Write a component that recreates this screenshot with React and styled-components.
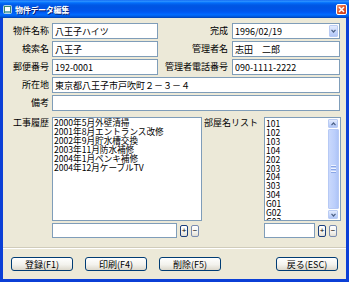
import React from 'react'
import styled, { createGlobalStyle } from 'styled-components'

const GlobalStyle = createGlobalStyle`
  html, body {
    margin: 0;
    padding: 0;
    background: #ffffff;
  }
  body {
    font-family: "Noto Sans CJK JP", "Liberation Sans", sans-serif;
    font-size: 9px;
    color: #000;
  }
`;

const Window = styled.div`
  width: 349px;
  height: 282px;
  display: flex;
  flex-direction: column;
  background: #0b3fd6;
`;

const TitleBar = styled.div`
  height: 18px;
  flex: none;
  display: flex;
  align-items: center;
  gap: 3px;
  padding: 0 2px 0 3px;
  background: linear-gradient(to bottom,
    #0058ee 0%, #3593ff 5%, #288eff 8%, #127dff 12%, #036ffc 16%,
    #0262ee 22%, #0057e5 30%, #0054e3 40%, #0055eb 60%, #005bf5 70%,
    #026afe 80%, #0062ef 88%, #0052d6 94%, #0040ab 100%);
`;

const TitleText = styled.span`
  flex: 1;
  color: #ffffff;
  font-weight: bold;
  font-size: 8px;
  letter-spacing: -0.3px;
  text-shadow: 1px 1px 0 #0a1d6e;
`;

const CloseBox = styled.div`
  width: 11px;
  height: 11px;
  box-sizing: border-box;
  border: 1px solid #ffffff;
  border-radius: 2px;
  background: linear-gradient(135deg, #f19a7b, #e35a2b 45%, #c8391a);
  display: flex;
  align-items: center;
  justify-content: center;
`;

const Frame = styled.div`
  flex: 1;
  display: flex;
  padding: 0 3px 3px;
`;

const Content = styled.div`
  flex: 1;
  display: flex;
  flex-direction: column;
  background: #ece9d8;
`;

const FormGrid = styled.div`
  display: grid;
  grid-template-columns: 49px 106px 74px 108px;
  grid-auto-rows: 16px;
  row-gap: 2px;
  padding-top: 5px;
`;

const Label = styled.div`
  text-align: right;
  padding-right: ${p => p.$pad || 3}px;
  align-self: ${p => (p.$top ? 'start' : 'center')};
  padding-top: ${p => (p.$top ? 1 : 0)}px;
  white-space: nowrap;
  line-height: 10px;
`;

const TextBox = styled.input`
  box-sizing: border-box;
  width: 100%;
  min-width: 0;
  height: ${p => p.$h || 16}px;
  margin: 0;
  padding: 0 2px;
  border: 1px solid #7f9db9;
  background: #ffffff;
  font: inherit;
  font-size: 9px;
  color: #000;
  outline: none;
  grid-column: ${p => (p.$wide ? 'span 3' : 'auto')};
`;

const Combo = styled.div`
  box-sizing: border-box;
  height: 16px;
  border: 1px solid #7f9db9;
  background: #ffffff;
  display: flex;
  align-items: center;
  padding: 1px 1px 1px 2px;
`;

const ComboText = styled.span`
  flex: 1;
`;

const ArrowBtn = styled.div`
  width: ${p => p.$w || 9}px;
  height: ${p => p.$h || 12}px;
  box-sizing: border-box;
  border: 1px solid #b9cbf3;
  border-radius: 1px;
  background: linear-gradient(to bottom, #e3ebfd, #c4d5fb 60%, #b1c6f6);
  display: flex;
  align-items: center;
  justify-content: center;
  flex: none;
`;

const Lower = styled.div`
  display: grid;
  grid-template-columns: 49px 150px 62px 77px;
  grid-template-rows: 104px 15px;
  row-gap: 2px;
  margin-top: 6px;
`;

const Memo = styled.textarea`
  box-sizing: border-box;
  width: 100%;
  height: 100%;
  margin: 0;
  padding: 0 1px;
  border: 1px solid #7f9db9;
  background: #ffffff;
  font: inherit;
  font-size: 8.6px;
  line-height: 9.1px;
  color: #000;
  resize: none;
  overflow: hidden;
  outline: none;
`;

const ListBox = styled.div`
  box-sizing: border-box;
  border: 1px solid #7f9db9;
  background: #ffffff;
  display: flex;
  overflow: hidden;
`;

const ListItems = styled.div`
  flex: 1;
  padding: 1px 0 0 1px;
  font-size: 8.5px;
  line-height: 8.9px;
  overflow: hidden;
`;

const ScrollBar = styled.div`
  width: 11px;
  display: flex;
  flex-direction: column;
  gap: 1px;
  padding: 1px 1px 1px 0;
`;

const Thumb = styled.div`
  flex: 1;
  border: 1px solid #b6c9f5;
  border-radius: 1px;
  background: linear-gradient(to right, #c9d8fc, #bccffb 60%, #aec4f7);
  display: flex;
  flex-direction: column;
  align-items: center;
  justify-content: center;
  gap: 1px;
`;

const Grip = styled.span`
  width: 5px;
  height: 1px;
  background: #eef3fe;
  border-bottom: 1px solid #8aa6e6;
`;

const EditRow = styled.div`
  display: flex;
  align-items: center;
  gap: 3px;
  padding-right: ${p => p.$pad || 3}px;
`;

const MiniBtn = styled.button`
  width: 8px;
  height: 12px;
  box-sizing: border-box;
  padding: 0;
  flex: none;
  border: 1px solid ${p => (p.$focus ? '#1b3f7e' : '#7a8cb0')};
  border-radius: 2px;
  background: linear-gradient(to bottom, #ffffff, #f4f3ee 60%, #e2ded3);
  font-family: "Liberation Sans", sans-serif;
  font-size: 8px;
  line-height: 9px;
  color: #000;
`;

const Separator = styled.div`
  margin-top: 9px;
  height: 0;
  border-top: 1px solid #d0ccbb;
  border-bottom: 1px solid #ffffff;
`;

const ButtonRow = styled.div`
  display: flex;
  gap: 12px;
  margin-top: 8px;
  padding: 0 8px;
`;

const PushButton = styled.button`
  width: 62px;
  height: 14px;
  box-sizing: border-box;
  padding: 0;
  border: 1px solid #003c74;
  border-radius: 3px;
  background: linear-gradient(to bottom, #ffffff, #f3f2ed 55%, #dcd8cc);
  font: inherit;
  font-size: 9px;
  line-height: 11px;
  color: #000;
  margin-left: ${p => (p.$right ? 'auto' : '0')};
`;

const Chevron = ({ up }) => (
  <svg width="5" height="4" viewBox="0 0 5 4">
    <path d={up ? 'M0.5 3.2 L2.5 1 L4.5 3.2' : 'M0.5 0.8 L2.5 3 L4.5 0.8'} fill="none" stroke="#4d6185" strokeWidth="1.2" />
  </svg>
);

const TitleIcon = () => (
  <svg width="9" height="9" viewBox="0 0 9 9">
    <rect x="0.5" y="0.5" width="8" height="8" rx="1" fill="#3c8a6e" stroke="#d7ecff" strokeWidth="0.8" />
    <rect x="2" y="2" width="5" height="4" fill="#ffffff" />
    <rect x="2" y="6.5" width="5" height="1" fill="#9fd3ff" />
  </svg>
);

const rooms = ['101', '102', '103', '104', '202', '203', '204', '303', '304', 'G01', 'G02', 'G03'];

const history = [
  '2000年5月外壁清掃',
  '2001年8月エントランス改修',
  '2002年9月貯水槽交換',
  '2003年11月防水補修',
  '2004年1月ペンキ補修',
  '2004年12月ケーブルTV',
].join('\n');

const App = () => {
  return (
    <>
      <GlobalStyle />
      <Window>
        <TitleBar>
          <TitleIcon />
          <TitleText>物件データ編集</TitleText>
          <CloseBox>
            <svg width="7" height="7" viewBox="0 0 7 7">
              <path d="M1 1 L6 6 M6 1 L1 6" stroke="#ffffff" strokeWidth="1.5" />
            </svg>
          </CloseBox>
        </TitleBar>
        <Frame>
          <Content>
            <FormGrid>
              <Label>物件名称</Label>
              <TextBox defaultValue="八王子ハイツ" />
              <Label $pad={4}>完成</Label>
              <Combo>
                <ComboText>1996/02/19</ComboText>
                <ArrowBtn><Chevron /></ArrowBtn>
              </Combo>

              <Label>検索名</Label>
              <TextBox defaultValue="八王子" />
              <Label $pad={4}>管理者名</Label>
              <TextBox defaultValue="志田　二郎" />

              <Label>郵便番号</Label>
              <TextBox defaultValue="192-0001" />
              <Label $pad={4}>管理者電話番号</Label>
              <TextBox defaultValue="090-1111-2222" />

              <Label>所在地</Label>
              <TextBox $wide defaultValue="東京都八王子市戸吹町２－３－４" />

              <Label>備考</Label>
              <TextBox $wide defaultValue="" />
            </FormGrid>

            <Lower>
              <Label $top>工事履歴</Label>
              <Memo readOnly value={history} />
              <Label $top $pad={6}>部屋名リスト</Label>
              <ListBox>
                <ListItems>
                  {rooms.map(r => <div key={r}>{r}</div>)}
                </ListItems>
                <ScrollBar>
                  <ArrowBtn $w={10} $h={9}><Chevron up /></ArrowBtn>
                  <Thumb>
                    <Grip />
                    <Grip />
                    <Grip />
                  </Thumb>
                  <ArrowBtn $w={10} $h={9}><Chevron /></ArrowBtn>
                </ScrollBar>
              </ListBox>

              <div />
              <EditRow>
                <TextBox $h={15} />
                <MiniBtn $focus>+</MiniBtn>
                <MiniBtn>−</MiniBtn>
              </EditRow>
              <div />
              <EditRow $pad={4}>
                <TextBox $h={15} />
                <MiniBtn $focus>+</MiniBtn>
                <MiniBtn>−</MiniBtn>
              </EditRow>
            </Lower>

            <Separator />

            <ButtonRow>
              <PushButton>登録(F1)</PushButton>
              <PushButton>印刷(F4)</PushButton>
              <PushButton>削除(F5)</PushButton>
              <PushButton $right>戻る(ESC)</PushButton>
            </ButtonRow>
          </Content>
        </Frame>
      </Window>
    </>
  )
}

export default App
